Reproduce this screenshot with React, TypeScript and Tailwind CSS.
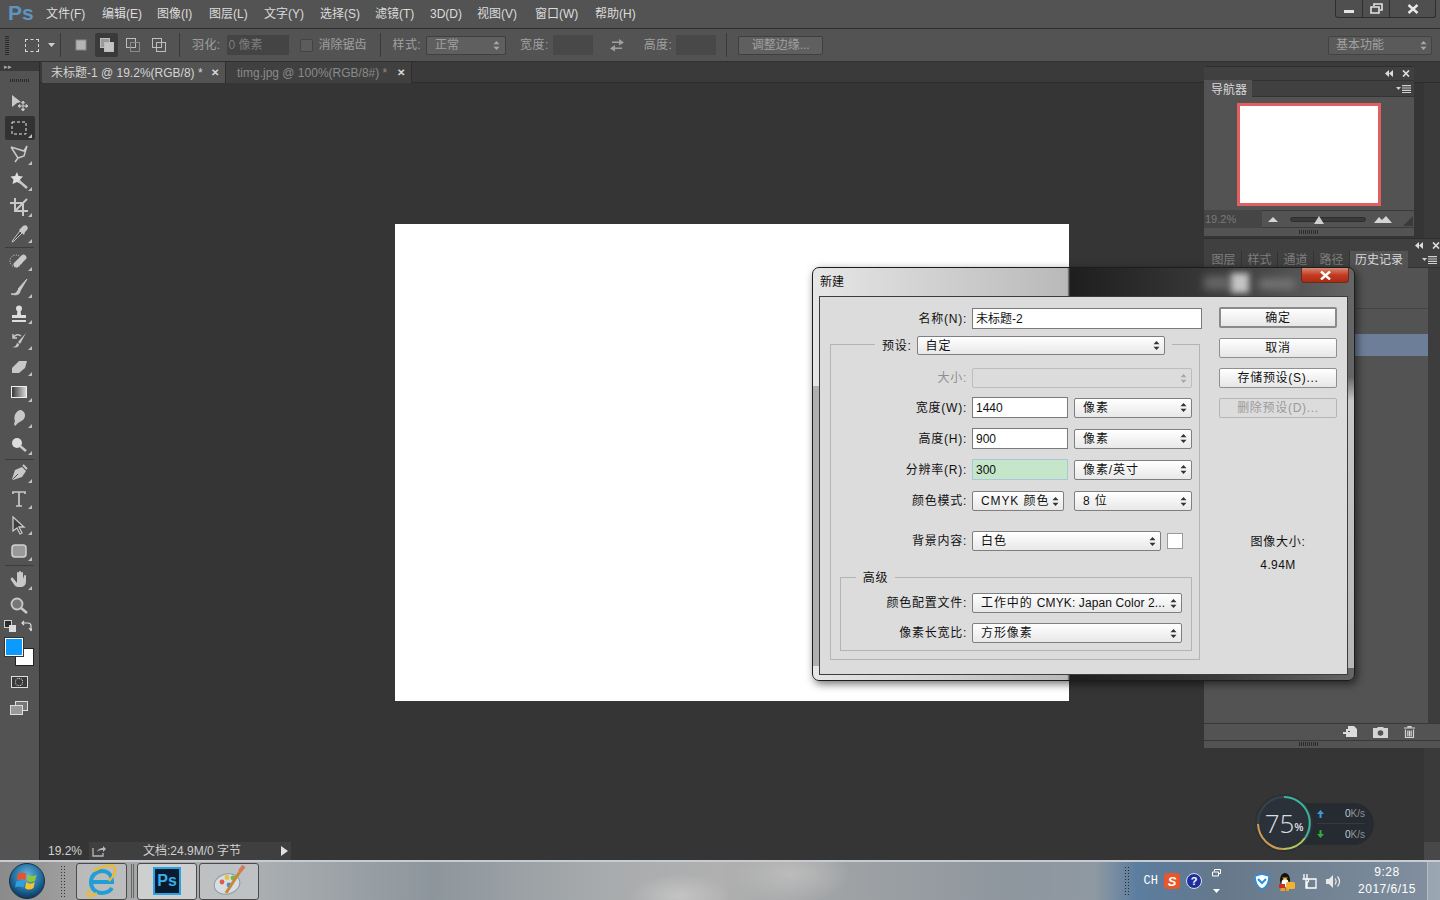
import { ReactNode } from 'react'

const ui = "font-['Liberation_Sans','Noto_Sans_CJK_SC',sans-serif]"

function Grip({ className = '' }: { className?: string }) {
    return <div className={`bg-[repeating-linear-gradient(90deg,#2b2b2b_0_1px,transparent_1px_2px)] ${className}`} />
}

function Chevrons({ dark = false, className = '' }: { dark?: boolean, className?: string }) {
    return (
        <svg width="7" height="11" viewBox="0 0 7 11" className={className}>
            <path d="M3.5 1 6.5 4.2H.5zM3.5 10 .5 6.8h6z" fill={dark ? '#333' : '#a8a8a8'} />
        </svg>
    )
}

const menus = [
    { label: '文件(F)', w: 'w-[56px]' },
    { label: '编辑(E)', w: 'w-[55px]' },
    { label: '图像(I)', w: 'w-[52px]' },
    { label: '图层(L)', w: 'w-[55px]' },
    { label: '文字(Y)', w: 'w-[56px]' },
    { label: '选择(S)', w: 'w-[55px]' },
    { label: '滤镜(T)', w: 'w-[55px]' },
    { label: '3D(D)', w: 'w-[47px]' },
    { label: '视图(V)', w: 'w-[58px]' },
    { label: '窗口(W)', w: 'w-[60px]' },
    { label: '帮助(H)', w: 'w-[50px]' },
]

function MenuBar() {
    return (
        <div className="flex h-[28px] shrink-0 items-center bg-[#535353] text-[12px] text-[#dcdcdc]">
            <span className="mb-[3px] ml-[8px] w-[38px] text-[21px] font-bold leading-none text-[#5f93c2]">Ps</span>
            {menus.map((m) => (
                <span key={m.label} className={`${m.w} whitespace-nowrap`}>{m.label}</span>
            ))}
            <div className="mb-[10px] ml-auto mr-[4px] flex h-[18px] w-[101px] overflow-hidden rounded-b-[3px] border border-t-0 border-[#2e2e2e] bg-[#4f4f4f]">
                <div className="flex w-[27px] items-end justify-center border-r border-[#2e2e2e] pb-[4px]">
                    <div className="h-[3px] w-[10px] bg-[#e4e4e4]" />
                </div>
                <div className="flex w-[27px] items-center justify-center border-r border-[#2e2e2e]">
                    <svg width="13" height="11" viewBox="0 0 13 11" fill="none" stroke="#e4e4e4" strokeWidth="1.6">
                        <path d="M4 3V1h8v6h-2" />
                        <path d="M1 4h8v6H1z" />
                    </svg>
                </div>
                <div className="flex flex-1 items-center justify-center">
                    <svg width="12" height="10" viewBox="0 0 12 10" stroke="#e8e8e8" strokeWidth="2.4">
                        <path d="M1.5 1 10.5 9M10.5 1 1.5 9" />
                    </svg>
                </div>
            </div>
        </div>
    )
}

function OptSep({ className = '' }: { className?: string }) {
    return <div className={`h-[24px] w-px bg-[#3a3a3a] ${className}`} />
}

function ModeIcon({ kind }: { kind: number }) {
    if (kind === 0) return <svg width="14" height="14"><rect x="2" y="2" width="10" height="10" fill="#b4b4b4" stroke="#888" /></svg>
    return (
        <svg width="16" height="16" fill="none">
            <rect x="1.5" y="1.5" width="9" height="9" fill={kind === 1 ? '#9a9a9a' : 'none'} stroke="#bdbdbd" />
            <rect x="5.5" y="5.5" width="9" height="9" fill={kind === 1 ? '#c4c4c4' : 'none'} stroke={kind === 2 ? '#8a8a8a' : '#bdbdbd'} />
        </svg>
    )
}

function OptionsBar() {
    return (
        <div className="flex h-[34px] shrink-0 items-center border-y border-[#2f2f2f] bg-[#535353] text-[12px] text-[#a0a0a0]">
            <div className="ml-[5px] h-[20px] w-[4px] bg-[repeating-linear-gradient(0deg,#2b2b2b_0_1px,transparent_1px_2px)]" />
            <div className="ml-[16px] h-[13px] w-[14px] border border-dashed border-[#d8d8d8]" />
            <svg width="7" height="4" className="ml-[9px]"><path d="M0 0h7L3.5 4z" fill="#d0d0d0" /></svg>
            <OptSep className="ml-[5px]" />
            <div className="ml-[9px] flex h-[24px] items-center">
                <div className="flex w-[22px] justify-center"><ModeIcon kind={0} /></div>
                <div className="ml-[3px] flex h-[24px] w-[23px] items-center justify-center rounded-[2px] bg-[#3a3a3a]"><ModeIcon kind={1} /></div>
                <div className="ml-[3px] flex w-[23px] justify-center"><ModeIcon kind={2} /></div>
                <div className="ml-[3px] flex w-[23px] justify-center"><ModeIcon kind={3} /></div>
            </div>
            <OptSep className="ml-[9px]" />
            <span className="ml-[12px] tracking-[0.4px]">羽化:</span>
            <div className="ml-[6px] flex h-[20px] w-[62px] items-center bg-[#444] pl-[2px] text-[#7c7c7c]">0 像素</div>
            <div className="ml-[11px] h-[13px] w-[13px] rounded-[2px] border border-[#444] bg-[#5c5c5c]" />
            <span className="ml-[6px]">消除锯齿</span>
            <OptSep className="ml-[13px]" />
            <span className="ml-[12px] tracking-[0.4px]">样式:</span>
            <div className="ml-[5px] flex h-[19px] w-[80px] items-center justify-between rounded-[2px] border border-[#3f3f3f] bg-[#5f5f5f] pl-[8px] pr-[5px]">
                <span>正常</span>
                <Chevrons />
            </div>
            <span className="ml-[14px] tracking-[0.4px]">宽度:</span>
            <div className="ml-[4px] h-[20px] w-[40px] bg-[#484848]" />
            <svg width="16" height="14" viewBox="0 0 16 14" className="ml-[16px]" fill="#a0a0a0">
                <path d="M3 3.5h7V1l5 3.5-5 3V5H3zM13 9.5H6V7l-5 3.5 5 3V11h7z" />
            </svg>
            <span className="ml-[19px] tracking-[0.4px]">高度:</span>
            <div className="ml-[4px] h-[20px] w-[40px] bg-[#484848]" />
            <OptSep className="ml-[10px]" />
            <div className="ml-[11px] flex h-[19px] w-[85px] items-center justify-center rounded-[2px] border border-[#3f3f3f] bg-[#5f5f5f]">调整边缘...</div>
            <div className="ml-auto mr-[8px] flex h-[19px] w-[104px] items-center justify-between rounded-[2px] border border-[#424242] bg-[#5a5a5a] pl-[7px] pr-[4px]">
                <span>基本功能</span>
                <Chevrons />
            </div>
        </div>
    )
}

const c = '#c8c8c8'
const toolIcons: ReactNode[] = [
    <><path d="M3 3 3 15 8 11 12 10z" fill={c} /><path d="M14 10v8M10 14h8M14 9l-1.5 2h3zM14 19l-1.5-2h3zM9 14l2-1.5v3zM19 14l-2-1.5v3z" stroke={c} fill={c} strokeWidth="1" /></>,
    <rect x="3" y="4" width="14" height="12" fill="none" stroke="#e6e6e6" strokeDasharray="3 2" />,
    <path d="M2 3 15 7 18 2 15 12 9 14 2 3M9 14 6 18" fill="none" stroke={c} strokeWidth="1.5" />,
    <><path d="M8 1 9.500 5 14 5.500 11 8.500 12 13 8 11 3.500 13 4.500 8.500 1.500 5.500 6 5z" fill="#e0e0e0" /><path d="m10 10 8 7" stroke={c} strokeWidth="2.4" /></>,
    <path d="M6 1v13h13M1 6h13v13M18 2 6 14" fill="none" stroke={c} strokeWidth="2" />,
    <><path d="M4 17 3 19l2-1 8-8-2-2z" fill="#444" stroke={c} /><path d="m10 7 5 5 1-3 2-2c1-1 1-3 0-4s-3-1-4 0l-2 2z" fill={c} /></>,
    <><path d="m5 12 8-8c2-2 6 2 4 4l-8 8c-2 2-6-2-4-4z" fill={c} /><circle cx="7" cy="10" r="6" fill="none" stroke="#ddd" strokeDasharray="1 1.5" /></>,
    <path d="M18 2 9 12l2 2zM2 17c4 0 6-1 7-4l2 1c0 3-3 5-9 3z" fill={c} stroke={c} />,
    <><circle cx="10" cy="4.500" r="3" fill="#ddd" /><path d="M8.500 6h3l.5 5h-4zM3 11h14v3H3zM3 16h14v2H3z" fill="#ddd" /></>,
    <><path d="M17 3 9 12l2 2zM3 17c3 0 4-1 5-4l2 1c0 3-2 4-7 3z" fill={c} /><path d="M4 8c2-4 6-4 8-2M4 4v4h4" fill="none" stroke={c} strokeWidth="1.400" /></>,
    <path d="M3 12 10 5h8l-2 7-6 5H3z" fill={c} />,
    <><defs><linearGradient id="toolgrad"><stop offset="0" stopColor="#333" /><stop offset="1" stopColor="#ddd" /></linearGradient></defs><rect x="2.500" y="4.500" width="15" height="11" fill="url(#toolgrad)" stroke="#eee" /></>,
    <path d="M12 2c5 2 5 7 2 10l-5 3-3 3-1-2 1-3c-2-4 1-11 6-11z" fill={c} />,
    <><circle cx="8" cy="8" r="5" fill="#dcdcdc" /><path d="m11 11 6 5" stroke={c} strokeWidth="2.400" /></>,
    <><path d="M13 4 17 8 13 14 4 17 3 16 6 7z" fill={c} /><path d="M3.500 16.500 9 11" stroke="#535353" /><path d="m14 2 4 4" stroke={c} strokeWidth="2" /></>,
    <path d="M4 5V3h12v2M10 3v14M7 17h6" fill="none" stroke={c} strokeWidth="1.700" />,
    <path d="M4 2 4 16 8 13 11 19 13 18 10 12 15 12z" fill="#3d3d3d" stroke={c} strokeWidth="1.300" />,
    <rect x="3" y="4" width="14" height="12" rx="3" fill="#999" stroke="#d2d2d2" strokeWidth="1.500" />,
    <path d="M4 9 8 14V4a1 1 0 0 1 2 0V9 3a1 1 0 0 1 2 0V9 4a1 1 0 0 1 2 0V10l1-3a1 1 0 0 1 2 0V12c0 4-2 6-6 6H9C6 18 5 15 2 11c-1-2 1-3 2-2z" fill={c} />,
    <><circle cx="8" cy="8" r="5.500" fill="#777" stroke={c} strokeWidth="1.800" /><path d="m12 12 6 5" stroke={c} strokeWidth="2.600" /></>,
]

function Tool({ icon, active, more = true }: { icon: ReactNode, active?: boolean, more?: boolean }) {
    return (
        <div className="relative flex h-[26.2px] items-center justify-center pr-[1px]">
            {active && <div className="absolute left-[5px] top-[1px] h-[24px] w-[30px] rounded-[2px] bg-[#323232]" />}
            <svg width="20" height="20" viewBox="0 0 20 20" className="relative">{icon}</svg>
            {more && <div className="absolute bottom-[3px] right-[7px] h-0 w-0 border-b-[4px] border-l-[4px] border-b-[#c0c0c0] border-l-transparent" />}
        </div>
    )
}

function Toolbar() {
    const sep = <div className="mx-[5px] h-[2px] border-b border-[#3c3c3c]" />
    const group = (a: number, b: number) => toolIcons.slice(a, b).map((icon, i) => (
        <Tool key={a + i} icon={icon} active={a + i === 1} more={a + i !== 0 && a + i !== 19} />
    ))
    return (
        <div className="flex w-[40px] shrink-0 flex-col border-r border-[#2b2b2b] bg-[#535353]">
            <div className="flex h-[9px] items-center bg-[#3a3a3a] pl-[4px] text-[7px] leading-none text-[#aaa]">▸▸</div>
            <div className="flex h-[18px] justify-center pt-[8px]"><Grip className="h-[3px] w-[20px]" /></div>
            {group(0, 6)}
            {sep}
            {group(6, 14)}
            {sep}
            {group(14, 18)}
            {sep}
            {group(18, 20)}
            <div className="flex h-[14px] items-center justify-between pl-[4px] pr-[7px]">
                <svg width="12" height="12"><rect x="0.500" y="0.500" width="7" height="7" fill="#2a2a2a" stroke="#d0d0d0" /><rect x="5" y="5" width="7" height="7" fill="#ddd" /></svg>
                <svg width="11" height="12" viewBox="0 0 11 12" fill="none" stroke="#ddd" strokeWidth="1.200"><path d="M1 3h6c2 0 3 1 3 3v4M3 1 1 3l2 2M8 8l2 2.500L12 8" /></svg>
            </div>
            <div className="relative mt-[5px] h-[33px]">
                <div className="absolute left-[15px] top-[10px] h-[18px] w-[19px] border border-[#222] bg-white" />
                <div className="absolute left-[5px] top-[0px] h-[18px] w-[18px] border border-white bg-[#0b9bff] outline outline-[#333]" />
            </div>
            <div className="-mt-[2px] flex h-[26px] items-center justify-center pr-[1px]">
                <div className="flex h-[12px] w-[17px] items-center justify-center border border-[#ddd] bg-[#3a3a3a]">
                    <div className="h-[8px] w-[8px] rounded-full border border-dotted border-[#eee]" />
                </div>
            </div>
            <div className="flex h-[26px] items-center justify-center pr-[1px]">
                <svg width="18" height="14"><rect x="5.500" y="0.500" width="12" height="9" fill="#777" stroke="#ddd" /><rect x="0.500" y="4.500" width="12" height="9" fill="#999" stroke="#ddd" /></svg>
            </div>
        </div>
    )
}

function DocTab({ title, active }: { title: string, active?: boolean }) {
    return (
        <div className={`flex h-[21px] items-center justify-between border-r border-[#2e2e2e] pr-[6px] pt-[1px] text-[12px] ${active ? 'w-[184px] bg-[#535353] pl-[9px] text-[#d4d4d4]' : 'w-[186px] bg-[#404040] pl-[11px] text-[#8a8a8a]'}`}>
            <span className="whitespace-nowrap">{title}</span>
            <span className="text-[10px] font-bold leading-none text-[#d8d8d8]">✕</span>
        </div>
    )
}

function Main() {
    return (
        <div className="flex min-w-0 flex-1 flex-col">
            <div className="flex h-[21px] shrink-0 border-b border-[#2b2b2b] bg-[#3a3a3a] pl-[2px]">
                <DocTab title="未标题-1 @ 19.2%(RGB/8) *" active />
                <DocTab title="timg.jpg @ 100%(RGB/8#) *" />
            </div>
            <div className="flex min-h-0 flex-1">
                <div className="flex flex-1 items-center justify-center bg-[#353535]">
                    <div className="h-[477px] w-[674px] bg-white" />
                </div>
                <div className="w-[16px] bg-[#3a3a3a]" />
            </div>
            <div className="flex h-[18px] shrink-0 items-center bg-[#353535] text-[12px] text-[#d0d0d0]">
                <span className="ml-[8px] w-[41px]">19.2%</span>
                <div className="flex h-[18px] w-[202px] items-center bg-[#3f3f3f] pl-[3px]">
                    <svg width="15" height="12" viewBox="0 0 15 12" fill="none" stroke="#b8b8b8" strokeWidth="1.300"><path d="M1 3v8h10V8" /><path d="M5 7c1-3 3-4 6-4V1l3 3-3 3V5c-2 0-4 0-6 2z" fill="#b8b8b8" stroke="none" /></svg>
                    <span className="ml-[36px] whitespace-nowrap">文档:24.9M/0 字节</span>
                    <svg width="7" height="10" className="ml-auto mr-[3px]"><path d="M0 0 7 5 0 10z" fill="#e0e0e0" /></svg>
                </div>
                <div className="ml-auto h-[18px] w-[16px] bg-[#484848]" />
            </div>
        </div>
    )
}

function PanelControls({ gap, pr }: { gap: string, pr: string }) {
    return (
        <div className={`flex items-center justify-end ${pr}`}>
            <svg width="8" height="7" viewBox="0 0 8 7" fill="#dcdcdc"><path d="M4 0v7L0 3.500zM8 0v7L4 3.500z" /></svg>
            <svg width="8" height="7" viewBox="0 0 8 7" stroke="#dcdcdc" strokeWidth="1.700" className={gap}><path d="m1 .5 6 6M7 .5l-6 6" /></svg>
        </div>
    )
}

function PanelMenu() {
    return (
        <svg width="15" height="8" viewBox="0 0 15 8" className="ml-auto mr-[3px]" fill="#d0d0d0">
            <path d="M0 2h5L2.500 5zM6 0h9v1.200H6zM6 2.400h9v1.200H6zM6 4.800h9V6H6zM6 7h9v1H6z" />
        </svg>
    )
}

function Navigator() {
    return (
        <div className="absolute left-[1204px] top-[66px] flex h-[170px] w-[210px] flex-col rounded-t-[3px] border-t border-[#2e2e2e] bg-[#535353] text-[12px]">
            <div className="flex h-[13px] items-center justify-end bg-[#404040]"><PanelControls gap="ml-[9px]" pr="pr-[4px]" /></div>
            <div className="flex h-[17px] items-center border-y border-[#333] bg-[#404040]">
                <div className="flex h-[17px] w-[48px] items-center justify-center bg-[#535353] pl-[2px] pt-[2px] text-[#d8d8d8]">导航器</div>
                <PanelMenu />
            </div>
            <div className="flex flex-1 justify-center pt-[6px]">
                <div className="h-[103px] w-[144px] border-[3px] border-[#e35e5e] bg-white" />
            </div>
            <div className="relative flex h-[18px] items-center border-y border-[#3a3a3a]">
                <div className="flex h-[18px] w-[58px] items-center bg-[#454545] pl-[1px] text-[11px] text-[#7a7a7a]">19.2%</div>
                <svg width="10" height="5" className="ml-[6px]"><path d="M0 5 5 0 10 5z" fill="#d4d4d4" /></svg>
                <div className="relative ml-[12px] h-[5px] w-[76px] rounded-full border border-[#2e2e2e] bg-[#3a3a3a]">
                    <div className="absolute left-[23px] top-[-2px] h-0 w-0 border-x-[5px] border-b-[8px] border-x-transparent border-b-[#cfcfcf]" />
                </div>
                <svg width="18" height="7" className="ml-[8px]"><path d="M0 7 5 1 8 4 12 0 18 7z" fill="#d4d4d4" /></svg>
                <div className="absolute bottom-[1px] right-[1px] h-0 w-0 border-b-[10px] border-l-[10px] border-b-[#3a3a3a] border-l-transparent" />
            </div>
            <div className="flex h-[8px] justify-center pt-[2px]"><Grip className="h-[4px] w-[20px]" /></div>
        </div>
    )
}

const historyTabs = ['图层', '样式', '通道', '路径']

function History() {
    return (
        <div className="absolute left-[1204px] top-[238px] flex h-[510px] w-[236px] flex-col border-t border-[#2e2e2e] bg-[#535353] text-[12px]">
            <div className="flex h-[12px] items-center justify-end bg-[#404040]"><PanelControls gap="ml-[9px]" pr="pr-[0px]" /></div>
            <div className="flex h-[17px] items-center border-b border-[#333] bg-[#404040] pl-[2px] pt-[1px] text-[#7d7d7d]">
                {historyTabs.map((t) => (
                    <div key={t} className="flex h-[17px] w-[36px] items-center justify-center border-r border-[#333]">{t}</div>
                ))}
                <div className="flex h-[17px] w-[58px] items-center justify-center bg-[#535353] text-[#d8d8d8]">历史记录</div>
                <PanelMenu />
            </div>
            <div className="flex flex-1 min-h-0">
                <div className="flex w-[224px] flex-col pt-[40px]">
                    <div className="h-[26px] border-t border-[#444]" />
                    <div className="h-[22px] bg-[#6d7f98]" />
                </div>
                <div className="flex-1 bg-[#3d3d3d]" />
            </div>
            <div className="flex h-[18px] items-center justify-end gap-[16px] border-y border-[#383838] pr-[25px]">
                <svg width="14" height="12" viewBox="0 0 14 12" fill="#dcdcdc"><path d="M5 0h6l3 3v8H5V7h2V5H5zM0 6h3V3h2v3h3v2H5v3H3V8H0z" /></svg>
                <svg width="15" height="11" viewBox="0 0 15 11" fill="#d4d4d4"><path d="M0 1h4l1-1h5l1 1h4v10H0z" /><circle cx="7.500" cy="6" r="2.800" fill="#535353" /></svg>
                <svg width="11" height="12" viewBox="0 0 11 12" fill="none" stroke="#d4d4d4" strokeWidth="1.200"><path d="M0 2h11M4 2V.6h3V2M1.500 3.500V11.500h8V3.500M3.800 4.500v6M5.500 4.500v6M7.200 4.500v6" /></svg>
            </div>
            <div className="flex h-[7px] justify-center pr-[26px] pt-[1px]"><Grip className="h-[4px] w-[20px]" /></div>
        </div>
    )
}

function Field({ value, w, green }: { value?: string, w: string, green?: boolean }) {
    return (
        <div className={`flex h-[21px] items-center border px-[3px] ${w} ${green ? 'border-[#a9c7dc] bg-[#c5e6c8]' : 'border-[#7a7a7a] bg-white'}`}>
            {value}
        </div>
    )
}

function Select({ value, w, disabled, h = 'h-[20px]' }: { value?: ReactNode, w: string, disabled?: boolean, h?: string }) {
    return (
        <div className={`flex items-center justify-between rounded-[2px] border pl-[8px] pr-[4px] ${w} ${h} ${disabled ? 'border-[#bdbdbd] bg-[#dcdcdc] text-[#999]' : 'border-[#7f7f7f] bg-[linear-gradient(#ffffff,#e8e8e8)]'}`}>
            <span className="whitespace-nowrap tracking-[0.9px]">{value}</span>
            <Chevrons dark={!disabled} />
        </div>
    )
}

function Row({ label, children, w = 'w-[146px]', className = '', muted }: { label: string, children: ReactNode, w?: string, className?: string, muted?: boolean }) {
    return (
        <div className={`flex items-center ${className}`}>
            <span className={`mr-[5px] shrink-0 whitespace-nowrap text-right tracking-[0.75px] ${w} ${muted ? 'text-[#8f8f8f]' : ''}`}>{label}</span>
            {children}
        </div>
    )
}

function DlgButton({ label, primary, disabled }: { label: string, primary?: boolean, disabled?: boolean }) {
    return (
        <div className={`flex w-[118px] items-center justify-center rounded-[2px] tracking-[0.7px] ${primary ? 'h-[21px] border-2 border-[#8a8a8a]' : 'h-[20px] border border-[#8f8f8f]'} ${disabled ? 'border-[#b5b5b5] text-[#9a9a9a]' : 'bg-[linear-gradient(#ffffff,#e6e6e6)]'}`}>
            {label}
        </div>
    )
}

function Dialog() {
    return (
        <div className="absolute left-[812px] top-[267px] flex h-[414px] w-[543px] flex-col overflow-hidden rounded-[7px] border border-[#1d1d1d] bg-[linear-gradient(90deg,#e6e6e6_0,#b9b9b9_47%,#1e1e1e_47.5%,#3a3a3a_75%,#666666_100%)] px-[6px] pb-[5px] text-[12px] text-[#111] shadow-[2px_3px_8px_rgba(0,0,0,0.55)]">
            <div className="absolute left-0 top-[118px] h-[280px] w-[6px] bg-[#b0b0b0]" />
            <div className="absolute right-0 top-[110px] h-[290px] w-[6px] bg-[linear-gradient(#6a6a6a,#c8c8c8_8%,#b8b8b8)]" />
            <div className="relative flex h-[28px] shrink-0 items-center pl-[1px] text-[#111]">
                <span>新建</span>
                <div className="absolute left-[385px] top-[8px] h-[14px] w-[28px] bg-[#666] blur-[4px]" />
                <div className="absolute left-[412px] top-[5px] h-[20px] w-[18px] bg-[#c4c4c4] blur-[3px]" />
                <div className="absolute left-[440px] top-[11px] h-[10px] w-[36px] bg-[#777] blur-[4px]" />
                <div className="absolute right-[-1px] top-0 flex h-[15px] w-[48px] items-center justify-center rounded-b-[4px] border border-t-0 border-[#6b2a20] bg-[linear-gradient(#d58a78,#c43b20_50%,#a92c14)]">
                    <svg width="11" height="9" viewBox="0 0 11 9" stroke="#fff" strokeWidth="2.400"><path d="m1 .5 9 8M10 .5l-9 8" /></svg>
                </div>
            </div>
            <div className="relative flex min-h-0 flex-1 border border-[#3d3d3d] bg-[#dcdcdc] pl-[10px] pt-[10px]">
                <div className="w-[372px] shrink-0">
                    <Row label="名称(N):" className="h-[23px]" w="w-[137px]">
                        <Field value="未标题-2" w="w-[230px]" />
                    </Row>
                    <div className="mt-[14px] h-[316px] w-[370px] border border-[#b4b4b4] pt-[1px]">
                        <div className="-mt-[10px] ml-[44px] flex h-[19px] w-[297px] items-center bg-[#dcdcdc] pl-[7px]">
                            <span className="mr-[5px] shrink-0 tracking-[0.75px]">预设:</span>
                            <Select value="自定" w="w-[248px]" h="h-[19px]" />
                        </div>
                        <Row label="大小:" className="mt-[13px]" w="w-[136px]" muted>
                            <Select w="w-[220px]" disabled />
                        </Row>
                        <Row label="宽度(W):" className="mt-[9px]" w="w-[136px]">
                            <Field value="1440" w="w-[96px]" />
                            <div className="ml-[6px]"><Select value="像素" w="w-[118px]" /></div>
                        </Row>
                        <Row label="高度(H):" className="mt-[10px]" w="w-[136px]">
                            <Field value="900" w="w-[96px]" />
                            <div className="ml-[6px]"><Select value="像素" w="w-[118px]" /></div>
                        </Row>
                        <Row label="分辨率(R):" className="mt-[10px]" w="w-[136px]">
                            <Field value="300" w="w-[96px]" green />
                            <div className="ml-[6px]"><Select value="像素/英寸" w="w-[118px]" /></div>
                        </Row>
                        <Row label="颜色模式:" className="mt-[11px]" w="w-[136px]">
                            <Select value="CMYK 颜色" w="w-[92px]" />
                            <div className="ml-[10px]"><Select value="8 位" w="w-[118px]" /></div>
                        </Row>
                        <Row label="背景内容:" className="mt-[20px]" w="w-[136px]">
                            <Select value="白色" w="w-[189px]" />
                            <div className="ml-[6px] h-[16px] w-[16px] border border-[#9a9a9a] bg-white" />
                        </Row>
                        <div className="ml-[9px] mt-[26px] h-[74px] w-[352px] border border-[#b4b4b4]">
                            <div className="-mt-[8px] ml-[15px] flex h-[15px] w-[39px] items-center justify-center bg-[#dcdcdc] tracking-[0.75px]">高级</div>
                            <Row label="颜色配置文件:" className="mt-[8px]" w="w-[126px]">
                                <Select value={<>工作中的 <span className="tracking-[0.1px]">CMYK: Japan Color 2...</span></>} w="w-[210px]" />
                            </Row>
                            <Row label="像素长宽比:" className="mt-[10px]" w="w-[126px]">
                                <Select value="方形像素" w="w-[210px]" />
                            </Row>
                        </div>
                    </div>
                </div>
                <div className="ml-[17px] flex w-[118px] flex-col">
                    <DlgButton label="确定" primary />
                    <div className="mt-[10px] flex flex-col gap-[10px]">
                        <DlgButton label="取消" />
                        <DlgButton label="存储预设(S)..." />
                        <DlgButton label="删除预设(D)..." disabled />
                    </div>
                    <div className="mt-[115px] text-center tracking-[0.75px]">图像大小:</div>
                    <div className="mt-[5px] text-center tracking-[0.4px]">4.94M</div>
                </div>
            </div>
        </div>
    )
}

function SpeedArrow({ down }: { down?: boolean }) {
    return (
        <svg width="7" height="8" viewBox="0 0 7 8" className={down ? 'rotate-180' : ''}>
            <path d="M3.500 0 7 4H4.500v4h-2V4H0z" fill={down ? '#2fae3c' : '#3c9ad8'} />
        </svg>
    )
}

function SpeedWidget() {
    return (
        <div className="absolute left-[1255px] top-[794px] flex h-[58px] w-[120px] items-center">
            <div className="absolute left-[37px] top-[9px] flex h-[42px] w-[82px] flex-col justify-center rounded-r-[21px] bg-[#252b31] pl-[25px] pr-[9px] text-[10px] text-[#8a9099]">
                <div className="flex h-[20px] items-center justify-between border-b border-[#333a42]"><SpeedArrow /><span><span className="text-[#c8c8c8]">0</span>K/s</span></div>
                <div className="flex h-[20px] items-center justify-between"><SpeedArrow down /><span><span className="text-[#c8c8c8]">0</span>K/s</span></div>
            </div>
            <div className="relative flex h-[58px] w-[58px] items-center justify-center rounded-full bg-[#2b3138] text-[#d8dde0]">
                <svg width="58" height="58" viewBox="0 0 58 58" className="absolute inset-0" fill="none" strokeWidth="2">
                    <circle cx="29" cy="29" r="26" stroke="#3a424a" />
                    <path d="M29 3a26 26 0 0 1 21 41" stroke="#38b59a" />
                    <path d="M50 44a26 26 0 0 1-21 11" stroke="#b4c95a" />
                    <path d="M29 55A26 26 0 0 1 3 30" stroke="#d39a4c" />
                </svg>
                <span className="relative font-['Open_Sans',sans-serif] text-[26px] font-light leading-none">75</span>
                <span className="relative mt-[10px] text-[10px] font-bold leading-none">%</span>
            </div>
        </div>
    )
}

function TaskBtn({ w, pressed, children }: { w: string, pressed?: boolean, children: ReactNode }) {
    return (
        <div className={`flex h-[37px] items-center justify-center rounded-[3px] border border-[#4a4a4a] ${w} ${pressed ? 'bg-[#d8d8d8]/80' : 'bg-white/25'}`}>
            {children}
        </div>
    )
}

function Taskbar() {
    return (
        <div className="relative flex h-[40px] shrink-0 items-center border-t-2 border-[#c8ccd0] bg-[radial-gradient(ellipse_50px_22px_at_680px_34px,#c4c4c4,transparent),radial-gradient(ellipse_60px_30px_at_790px_12px,#bcbcbc,transparent),linear-gradient(90deg,#8a8a8a_0,#a5a5a5_6%,#aaaeb1_18%,#8d969c_30%,#a8abad_42%,#b0b0b0_50%,#a0a3a5_58%,#8e969e_70%,#8f99a2_76%,#5b7d9f_79%,#66788a_85%,#8290a0_100%)] pl-[9px]">
            <svg width="36" height="36" viewBox="0 0 36 36">
                <defs>
                    <radialGradient id="orb" cx="0.5" cy="0.35" r="0.7"><stop offset="0" stopColor="#6bb6e0" /><stop offset="0.6" stopColor="#1d6a9c" /><stop offset="1" stopColor="#0a2a4a" /></radialGradient>
                </defs>
                <circle cx="18" cy="18" r="17.500" fill="url(#orb)" stroke="#1e2f40" />
                <path d="M9 11c3-2 6-2 8.500 0l-1.300 6c-3-1-5-1-8.500 0z" fill="#e8532b" />
                <path d="M19 11.500c3 2 5 2 8.500 0l-1.300 6c-3 2-5 2-8.500 0z" fill="#8cc63e" />
                <path d="M7.300 18.500c3-1 5-1 8.500 0l-1.300 6c-3-1.500-6-1.500-8.500 0z" fill="#2f9fe0" />
                <path d="M17.300 19c3 2 5 2 8.500 0l-1.300 6c-3 2-6 2-8.500 0z" fill="#f9c22c" />
            </svg>
            <div className="ml-[15px] h-[32px] w-[6px] bg-[radial-gradient(#333_1px,transparent_1px)] bg-[length:3px_3px]" />
            <div className="ml-[10px]">
                <TaskBtn w="w-[51px]">
                    <svg width="36" height="34" viewBox="0 0 36 34" fill="none">
                        <path d="M7 18h21c0-7-4-11-10-11S7 12 7 18c0 7 5 11 11 11 5 0 8-2 10-5" stroke="#1f9ed8" strokeWidth="4" />
                        <path d="M6 25C1 33 5 34 13 29M10 7c8-5 23-9 21 0-1 4-4 8-6 10" stroke="#f0b929" strokeWidth="2.200" />
                    </svg>
                </TaskBtn>
            </div>
            <div className="ml-[4px] h-[34px] w-[3px] border-x border-[#666]" />
            <div className="ml-[3px]">
                <TaskBtn w="w-[60px]" pressed>
                    <div className="flex h-[28px] w-[28px] items-center justify-center border-[2px] border-[#27a2e4] bg-[#0a1b30] text-[16px] font-bold leading-none text-[#39aeea]">Ps</div>
                </TaskBtn>
            </div>
            <div className="ml-[2px]">
                <TaskBtn w="w-[60px]">
                    <svg width="34" height="32" viewBox="0 0 34 32">
                        <ellipse cx="15" cy="19" rx="13" ry="10" fill="#d8dde0" stroke="#8b9aa5" transform="rotate(-15 15 19)" />
                        <circle cx="10" cy="17" r="2.400" fill="#e25a4a" />
                        <circle cx="15" cy="12.500" r="2.400" fill="#e8c23a" />
                        <circle cx="21" cy="13" r="2.400" fill="#6dbb4a" />
                        <circle cx="17" cy="20" r="2.400" fill="#4a8fd8" />
                        <path d="M14 28 29 5" stroke="#c98836" strokeWidth="3" />
                        <path d="M28 6 32 1" stroke="#d87a5a" strokeWidth="4" />
                    </svg>
                </TaskBtn>
            </div>
            <div className="ml-auto flex h-full items-center">
                <div className="h-[30px] w-[7px] bg-[radial-gradient(#2a2a2a_1px,transparent_1px)] bg-[length:3px_3px]" />
                <span className="ml-[13px] font-['Liberation_Mono',monospace] text-[12px] text-white">CH</span>
                <div className="ml-[6px] flex h-[16px] w-[16px] items-center justify-center rounded-[4px] bg-[#e8562a] text-[13px] font-bold italic leading-none text-white">S</div>
                <div className="ml-[6px] flex h-[16px] w-[16px] items-center justify-center rounded-full border border-[#ddddee] bg-[#1e2f9c] text-[11px] font-bold leading-none text-white">?</div>
                <div className="ml-[7px] flex h-[24px] w-[14px] flex-col items-center justify-between">
                    <svg width="9" height="8" fill="none" stroke="#fff"><path d="M2.500 2.500V.5h6v4h-2M.5 3h6v4h-6z" /></svg>
                    <svg width="7" height="4"><path d="M0 0h7L3.500 4z" fill="#fff" /></svg>
                </div>
                <svg width="16" height="17" viewBox="0 0 16 17" className="ml-[31px]"><path d="M8 1 15 3c0 7-2 11-7 13C3 14 1 10 1 3z" fill="#fff" stroke="#2a8ee0" strokeWidth="1.500" /><path d="M4 6l4 4 4-4" fill="none" stroke="#2a8ee0" strokeWidth="2" /></svg>
                <svg width="18" height="19" viewBox="0 0 18 19" className="ml-[7px]"><ellipse cx="8" cy="8" rx="5" ry="7" fill="#111" /><ellipse cx="8" cy="11" rx="3.500" ry="4" fill="#fff" /><path d="M5 5.500h6L8 8z" fill="#f5b31e" /><path d="M2 12h6v4H2z" fill="#d62a1e" /><rect x="9" y="10" width="9" height="7" rx="1.500" fill="#f0b332" /><path d="M4 16h4v3H3zM9 17h3v2H9z" fill="#e8a020" /></svg>
                <svg width="16" height="17" viewBox="0 0 16 17" fill="none" stroke="#fff" strokeWidth="1.300" className="ml-[6px]"><path d="M5 6h10v9H5zM3 1v5M6 1v5M1.500 6h6v2l-1.500 2v5" /></svg>
                <svg width="16" height="15" viewBox="0 0 16 15" className="ml-[8px]"><path d="M1 5h3l4-4v13L4 10H1z" fill="#e8e8e8" /><path d="M10 4.500c1.500 2 1.500 4 0 6M12.500 2.500c2.500 3 2.500 7 0 10" fill="none" stroke="#e8e8e8" strokeWidth="1.200" /></svg>
                <div className="ml-[11px] w-[70px] text-center text-[12px] leading-[17px] tracking-[0.5px] text-white">
                    <div>9:28</div>
                    <div>2017/6/15</div>
                </div>
                <div className="ml-[5px] h-[38px] w-[13px] border-l border-[#bbb] bg-white/20" />
            </div>
        </div>
    )
}

export default function App() {
    return (
        <div className={`relative flex h-[900px] w-[1440px] flex-col overflow-hidden bg-[#353535] ${ui}`}>
            <MenuBar />
            <OptionsBar />
            <div className="flex min-h-0 flex-1">
                <Toolbar />
                <Main />
            </div>
            <Taskbar />
            <Navigator />
            <History />
            <Dialog />
            <SpeedWidget />
        </div>
    )
}
